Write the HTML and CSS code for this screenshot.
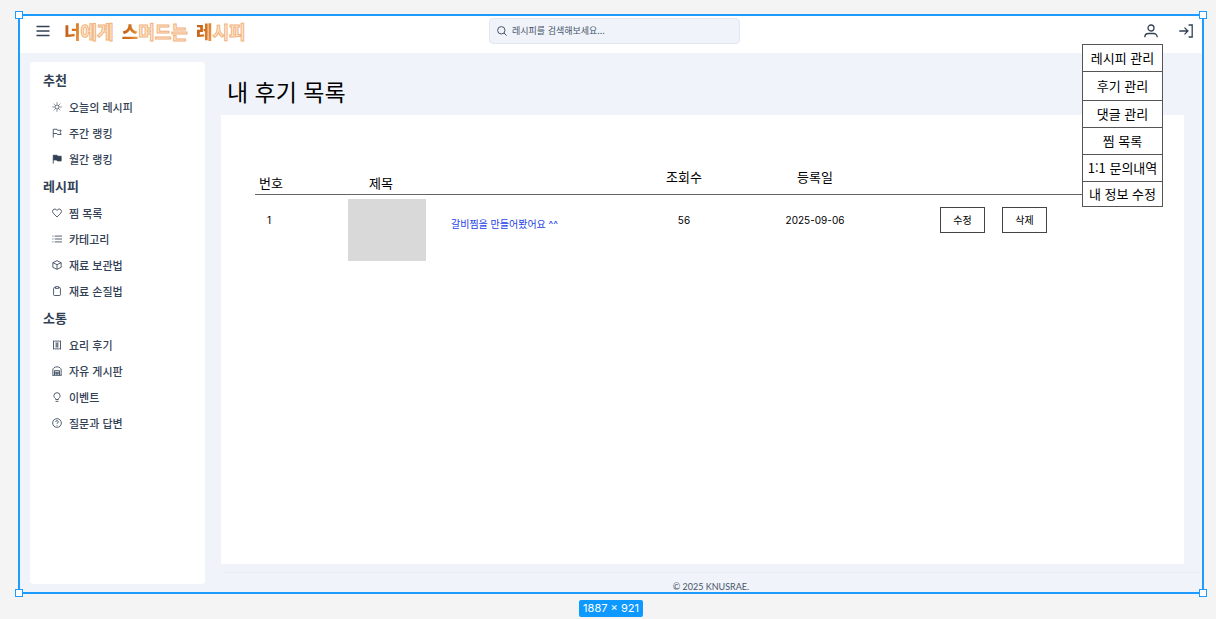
FILE: index.html
```html
<!DOCTYPE html>
<html lang="ko">
<head>
<meta charset="utf-8">
<meta name="viewport" content="width=device-width, initial-scale=1">
<title>내 후기 목록</title>
<link rel="stylesheet" href="styles.css">
</head>
<body>
<div class="frame">
  <span class="handle handle-tl"></span><span class="handle handle-tr"></span>
  <span class="handle handle-bl"></span><span class="handle handle-br"></span>

  <header class="topbar">
    <div class="brand">
      <button class="icon-button" type="button" aria-label="메뉴">
        <svg width="14" height="14" viewBox="0 0 14 14"><path d="M0.5 2.500h13M0.5 7h13M0.5 11.500h13"/></svg>
      </button>
      <a class="logo" href="#"><span class="word"><b>너</b><span class="outline">에게</span></span> <span class="word"><b>스</b><span class="outline">며드는</span></span> <span class="word"><b>레</b><span class="outline">시피</span></span></a>
    </div>
    <form class="search">
      <svg width="10" height="10" viewBox="0 0 10 10"><circle cx="4.3" cy="4.3" r="3.7"/><path d="M7 7l2.6 2.6"/></svg>
      <input type="search" aria-label="레시피 검색" placeholder="레시피를 검색해보세요...">
    </form>
    <div class="account">
      <button class="icon-button" type="button" aria-label="내 계정">
        <svg width="14" height="14" viewBox="0 0 14 14"><circle cx="7" cy="4" r="3"/><path d="M0.8 13.200c0-2.300 1.700-3.700 3.700-3.700h5c2 0 3.700 1.400 3.700 3.700"/></svg>
      </button>
      <button class="icon-button" type="button" aria-label="로그아웃">
        <svg width="14" height="14" viewBox="0 0 14 14"><path d="M0.300 7h8.500M5.500 3.600L8.900 7l-3.400 3.400M9.600 1h3.600v12h-3.600"/></svg>
      </button>
      <ul class="menu">
        <li><a href="#">레시피 관리</a></li>
        <li class="current"><a href="#">후기 관리</a></li>
        <li><a href="#">댓글 관리</a></li>
        <li><a href="#">찜 목록</a></li>
        <li><a href="#">1:1 문의내역</a></li>
        <li><a href="#">내 정보 수정</a></li>
      </ul>
    </div>
  </header>

  <div class="content">
    <nav class="sidebar">
      <h2>추천</h2>
      <ul>
        <li><a href="#"><svg viewBox="0 0 12 12"><circle cx="6" cy="6" r="2.500"/><path d="M6 .5v1.500M6 10v1.500M.5 6h1.500M10 6h1.500M2.100 2.100l1 1M8.900 8.900l1 1M2.100 9.900l1-1M8.900 3.100l1-1"/></svg>오늘의 레시피</a></li>
        <li><a href="#"><svg viewBox="0 0 12 12"><path d="M1.500 11.500V1.500h4.500l.6 1.200h4.400l-1.200 2.500L11 7.800H6.500l-.6-1.200H1.500"/></svg>주간 랭킹</a></li>
        <li><a href="#"><svg viewBox="0 0 12 12"><path class="solid" d="M1.500 11.500V1.500h4.500l1 1.200h4v5.600H6.500l-1-1.200h-4"/></svg>월간 랭킹</a></li>
      </ul>
      <h2>레시피</h2>
      <ul>
        <li><a href="#"><svg viewBox="0 0 12 12"><path d="M6 10.800L1.400 6.100a2.800 2.800 0 0 1 4-4L6 2.800l.6-.7a2.800 2.800 0 0 1 4 4z"/></svg>찜 목록</a></li>
        <li><a href="#"><svg viewBox="0 0 12 12"><path d="M3.200 2.500H12M3.200 6H12M3.200 9.500H12M.5 2.500h1.200M.5 6h1.200M.5 9.500h1.200"/></svg>카테고리</a></li>
        <li><a href="#"><svg viewBox="0 0 12 12"><path d="M6 .8l5 2.400v5.600l-5 2.400-5-2.400V3.200zM1 3.200l5 2.400 5-2.400M6 5.600v5.600"/></svg>재료 보관법</a></li>
        <li><a href="#"><svg viewBox="0 0 12 12"><path d="M4 1.900H2.900a1 1 0 0 0-1 1v7.500a1 1 0 0 0 1 1h6.200a1 1 0 0 0 1-1V2.900a1 1 0 0 0-1-1H8M4 .8h4v2.100H4z"/></svg>재료 손질법</a></li>
      </ul>
      <h2>소통</h2>
      <ul>
        <li><a href="#"><svg viewBox="0 0 12 12"><path d="M1.800 1l1.400.6L4.600 1 6 1.600 7.400 1l1.400.6 1.400-.6v10l-1.400-.6-1.400.6L6 10.400l-1.400.6-1.400-.6-1.400.6zM4 3.700h4M4 6h4M4 8.300h4M6 3.500v5"/></svg>요리 후기</a></li>
        <li><a href="#"><svg viewBox="0 0 12 12"><path d="M1 11.200V4.700C1 2.500 3.200 1 6 1s5 1.500 5 3.700v6.500M3 11.200V5.600h6v5.600M3 7.500h6M3 9.300h6M.5 11.200h11M6 7.500v3.700"/></svg>자유 게시판</a></li>
        <li><a href="#"><svg viewBox="0 0 12 12"><path d="M4.500 9V8.200C3.300 7.400 2.300 6.200 2.300 4.500a3.700 3.700 0 0 1 7.400 0c0 1.700-1 2.900-2.200 3.700V9zM4.200 11.200h3.600"/></svg>이벤트</a></li>
        <li><a href="#"><svg viewBox="0 0 12 12"><circle cx="6" cy="6" r="5.200"/><path d="M4.500 4.700a1.500 1.500 0 1 1 2.300 1.200c-.6.400-.8.600-.8 1.200M6 8.300v.9"/></svg>질문과 답변</a></li>
      </ul>
    </nav>

    <div class="page">
      <h1>내 후기 목록</h1>
      <main class="panel">
        <table class="reviews">
          <thead>
            <tr>
              <th class="col-number">번호</th>
              <th class="col-title">제목</th>
              <th class="col-views">조회수</th>
              <th class="col-date">등록일</th>
              <td class="col-actions"></td>
            </tr>
          </thead>
          <tbody>
            <tr>
              <td class="col-number">1</td>
              <td class="col-title"><div class="recipe"><span class="thumb"></span><a href="#">갈비찜을 만들어봤어요 ^^</a></div></td>
              <td class="col-views">56</td>
              <td class="col-date">2025-09-06</td>
              <td class="col-actions"><div class="actions"><button type="button">수정</button><button type="button">삭제</button></div></td>
            </tr>
          </tbody>
        </table>
      </main>
      <footer class="footer">© 2025 KNUSRAE.</footer>
    </div>
  </div>
</div>
<div class="size-badge">1887 × 921</div>
</body>
</html>
```
FILE: styles.css
```css
* { box-sizing: border-box; }

body {
  margin: 0;
  min-height: 100vh;
  padding: 14px 12px 2px 18px;
  display: flex;
  flex-direction: column;
  background: #f4f4f4;
  color: #000;
  font-family: Inter, "Noto Sans CJK KR", sans-serif;
}

a { color: inherit; text-decoration: none; }
ul { list-style: none; margin: 0; padding: 0; }
button, input { font: inherit; color: inherit; }
svg { display: block; fill: none; stroke: currentColor; }

.frame {
  position: relative;
  flex: 1;
  display: flex;
  flex-direction: column;
  border: 2px solid #1e9bff;
  background: #f0f3f9;
}

.handle {
  position: absolute;
  z-index: 3;
  width: 8px;
  height: 8px;
  border: 1px solid #1e9bff;
  background: #fff;
}
.handle-tl { top: -5px; left: -5px; }
.handle-tr { top: -5px; right: -5px; }
.handle-bl { bottom: -5px; left: -5px; }
.handle-br { bottom: -5px; right: -5px; }

.topbar {
  height: 37px;
  padding: 2px 9px 10px 16px;
  display: grid;
  grid-template-columns: 1fr 251px 1fr;
  align-items: center;
  background: #fff;
  color: #334155;
}
.brand { display: flex; align-items: center; gap: 14px; }
.icon-button { padding: 0; border: 0; background: none; cursor: pointer; }
.icon-button svg { stroke-width: 1.3; }

.logo { display: flex; gap: 8px; font: bold 18px/24px "Noto Sans CJK KR", sans-serif; }
.logo b {
  background: linear-gradient(100deg, #b9581c, #d9761f 60%, #efa662);
  background-clip: text;
  color: transparent;
}
.logo .outline { color: #fdebd7; -webkit-text-stroke: 1px #f2b27b; }

.search {
  height: 26px;
  padding: 0 7px;
  display: flex;
  align-items: center;
  gap: 5px;
  border: 1px solid #e2e8f0;
  border-radius: 4px;
  background: #f0f3f9;
  color: #475569;
}
.search input {
  flex: 1;
  min-width: 0;
  padding: 0;
  border: 0;
  outline: 0;
  background: none;
  font: 9px/14px "Noto Sans CJK KR", sans-serif;
}
.search input::placeholder { color: #475569; opacity: 1; }

.account {
  position: relative;
  display: flex;
  justify-content: flex-end;
  gap: 21px;
}
.menu {
  position: absolute;
  z-index: 2;
  top: 20px;
  right: 30px;
  width: 81px;
  border: 1px solid #555;
  background: #fff;
  color: #000;
  font: 13px/26px "Noto Sans CJK KR", sans-serif;
  text-align: center;
  white-space: nowrap;
}
.menu li + li { border-top: 1px solid #555; }
.menu li:last-child { line-height: 24px; }
.menu .current { line-height: 28px; }

.content {
  flex: 1;
  display: flex;
  gap: 16px;
  padding: 9px 0 0 10px;
}
.sidebar {
  width: 175px;
  margin-bottom: 8px;
  padding: 4px 13px;
  border-radius: 4px;
  background: #fff;
  color: #334155;
  font-family: "Noto Sans CJK KR", sans-serif;
}
.sidebar h2 { margin: 0; font-size: 13px; line-height: 28px; font-weight: 700; }
.sidebar a {
  display: flex;
  align-items: center;
  gap: 7px;
  padding-left: 9px;
  font-size: 11px;
  font-weight: 500;
  line-height: 26px;
}
.sidebar svg { width: 10px; height: 10px; }
.sidebar .solid { fill: currentColor; }

.page { flex: 1; min-width: 0; display: flex; flex-direction: column; }
.page h1 {
  margin: 0;
  padding: 12px 6px 7px;
  font: 23px/34px "Noto Sans CJK KR", sans-serif;
}
.panel {
  flex: 1;
  margin-right: 18px;
  padding: 49px 34px;
  background: #fff;
}

.reviews { width: 100%; table-layout: fixed; border-collapse: collapse; font-size: 10px; }
.reviews th {
  padding: 0 0 2px;
  vertical-align: bottom;
  font-size: 13px;
  line-height: 18px;
  font-weight: 400;
}
.reviews thead { height: 30px; border-bottom: 1px solid #666; }
.reviews td { padding: 0; vertical-align: top; line-height: 16px; }
.reviews th.col-number { padding-left: 4px; text-align: left; }
.reviews th.col-title { padding-left: 21px; text-align: left; }
.reviews th.col-views, .reviews th.col-date { padding-bottom: 8px; }
.col-number { width: 93px; }
.col-title { width: 271px; }
.col-views { width: 130px; text-align: center; }
.col-date { width: 132px; text-align: center; }
.reviews tbody td { padding-top: 17px; }
.reviews tbody .col-number { padding-left: 12px; }
.reviews tbody .col-title { padding-top: 4px; }
.reviews tbody .col-actions { padding: 12px 0 0 59px; }

.recipe { display: flex; gap: 25px; color: #1d3fe8; }
.recipe a { padding-top: 17px; }
.thumb { width: 78px; height: 62px; background: #d9d9d9; }

.actions { display: flex; gap: 17px; }
.actions button {
  width: 45px;
  height: 26px;
  padding: 0;
  border: 1px solid #444;
  background: #fff;
  cursor: pointer;
}

.footer {
  margin: 8px 3px 0 2px;
  padding-top: 9px;
  border-top: 1px solid #e8ebf1;
  color: #475569;
  font: 9px/10px Lato, sans-serif;
  text-align: center;
}

.size-badge {
  align-self: center;
  margin-top: 6px;
  padding: 0 4px;
  border-radius: 2px;
  background: #0d99ff;
  color: #fff;
  font-size: 11px;
  line-height: 17px;
}
```
